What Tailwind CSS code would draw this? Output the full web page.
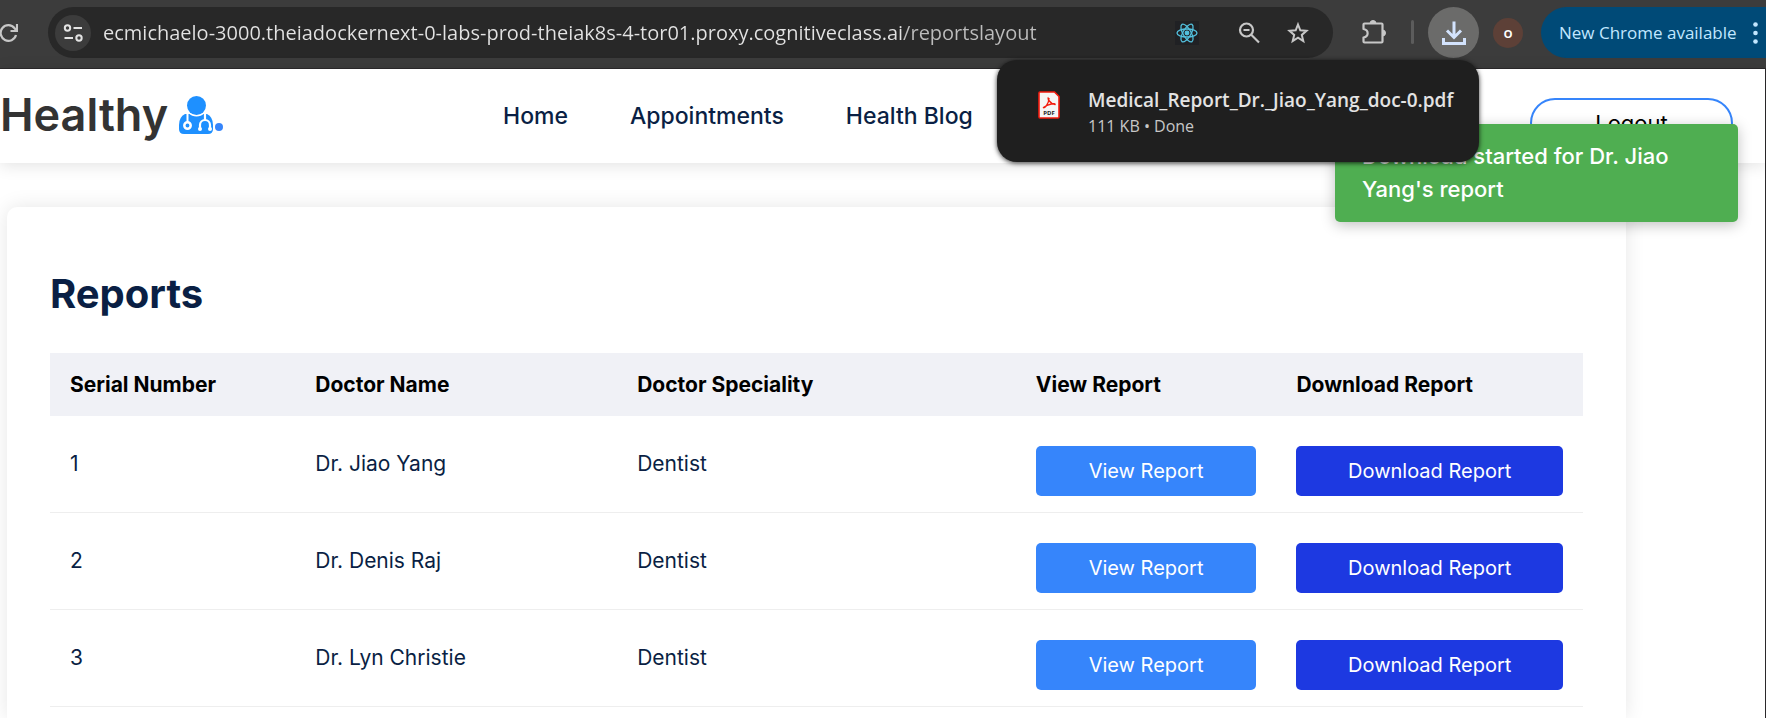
<!DOCTYPE html>
<html lang="en">
<head>
<meta charset="utf-8">
<meta name="viewport" content="width=device-width, initial-scale=1">
<title>Healthy - Reports</title>
<script src="https://cdn.jsdelivr.net/npm/@tailwindcss/browser@4"></script>
</head>
<body class="relative flex min-h-screen flex-col overflow-hidden bg-white font-['Inter',sans-serif] text-[#0a1f44]">

<!-- Browser toolbar -->
<div class="flex h-[69px] shrink-0 items-start border-b border-[#2b292b] bg-[#3c3c3c] pt-[7px] font-['Open_Sans','Noto_Sans',sans-serif]">
  <button aria-label="Reload" class="mr-[30px] flex h-[51px] w-[18px] shrink-0 items-center text-[#c7c7c7]">
    <svg class="h-[18px] w-[18px]" viewBox="0 0 18 18" fill="none" stroke="currentColor" stroke-width="2.2"><path d="M16 11A7.8 7.8 0 1 1 14.600 4.200L16.500 6.500"/><path d="M17 0V7H10.500"/></svg>
  </button>
  <div class="flex h-[51px] min-w-0 flex-1 items-center rounded-full bg-[#282828] pl-[7px] pr-[23px]">
    <button aria-label="View site information" class="flex size-[36px] shrink-0 items-center justify-center rounded-full bg-[#3c3c3c] text-[#e3e3e3]">
      <svg class="h-[20px] w-[20px]" viewBox="0 0 20 20" fill="none" stroke="currentColor" stroke-width="2"><circle cx="4.500" cy="5" r="2.700"/><path d="M10.500 5H19M1.500 15H10"/><circle cx="16" cy="15" r="2.700"/></svg>
    </button>
    <input aria-label="Address" class="ml-[12px] min-w-0 flex-1 bg-linear-to-r from-[#e3e3e3] from-[800px] to-[#bdbdbd] to-[800px] bg-clip-text text-[20px] text-transparent outline-none" value="ecmichaelo-3000.theiadockernext-0-labs-prod-theiak8s-4-tor01.proxy.cognitiveclass.ai/reportslayout">
    <div class="flex size-[24px] shrink-0 items-center justify-center bg-[#202124]">
      <svg class="size-[22px]" viewBox="0 0 22 22" fill="none" stroke="#53c1de" stroke-width="1.300"><ellipse cx="11" cy="11" rx="10" ry="4"/><ellipse cx="11" cy="11" rx="10" ry="4" transform="rotate(60 11 11)"/><ellipse cx="11" cy="11" rx="10" ry="4" transform="rotate(120 11 11)"/><circle cx="11" cy="11" r="1.800" fill="#53c1de"/></svg>
    </div>
    <button aria-label="Zoom" class="ml-[39px] shrink-0 text-[#c7c7c7]">
      <svg class="size-[22px]" viewBox="0 0 22 22" fill="none" stroke="currentColor" stroke-width="2.200"><circle cx="8.500" cy="8" r="6.500"/><path d="M5.500 8H11.500M13 12.500L21 20.500"/></svg>
    </button>
    <button aria-label="Bookmark this tab" class="ml-[26px] shrink-0 text-[#c7c7c7]">
      <svg class="size-[24px]" viewBox="0 0 24 24" fill="none" stroke="currentColor" stroke-width="2"><path d="M12 3.500L14.300 9.300L20.500 9.800L15.800 13.900L17.300 20L12 16.700L6.700 20L8.200 13.900L3.500 9.800L9.700 9.300Z"/></svg>
    </button>
  </div>
  <button aria-label="Extensions" class="ml-[28px] flex h-[51px] shrink-0 items-center text-[#c7c7c7]">
    <svg class="size-[26px]" viewBox="0 0 26 26" fill="none" stroke="currentColor" stroke-width="2.200"><path d="M3.500 3.500H20.500Q21.500 3.500 21.500 4.500V21.500Q21.500 22.500 20.500 22.500H3.500Q2.500 22.500 2.500 21.500V17.500C8 16.500 8 10 2.500 9V4.500Q2.500 3.500 3.500 3.500Z" stroke-linejoin="round"/><path d="M9 3.500A3 3 0 0 1 15 3.500ZM21.500 10A3 3 0 0 1 21.500 16Z" fill="currentColor" stroke-width="1"/></svg>
  </button>
  <span class="ml-[24px] mt-[13px] h-[24px] w-[3px] shrink-0 rounded bg-[#5c5c5c]"></span>
  <button aria-label="Downloads" class="ml-[14px] flex size-[51px] shrink-0 items-center justify-center rounded-full bg-[#6b6b6a] text-[#d3e3fd]">
    <svg class="size-[26px]" viewBox="0 0 26 26" fill="none" stroke="currentColor" stroke-width="3"><path d="M13 1.500V17M6 10.500L13 17.500L20 10.500M2.500 18V23.500H23.500V18"/></svg>
  </button>
  <button aria-label="Profile" class="ml-[14px] mt-[11px] flex size-[30px] shrink-0 items-center justify-center rounded-full bg-[#5d4037] pb-[2px] text-[15px] font-semibold leading-none text-white">o</button>
  <button class="ml-[18px] flex h-[51px] w-[225px] shrink-0 items-center justify-between rounded-l-full bg-[#004a77] pl-[18px] pr-[8px] text-[17px] text-[#c2e7ff]">
    <span class="whitespace-nowrap">New Chrome available</span>
    <svg class="h-[22px] w-[5px]" viewBox="0 0 5 22" fill="currentColor"><circle cx="2.500" cy="2.500" r="2.300"/><circle cx="2.500" cy="11" r="2.300"/><circle cx="2.500" cy="19.500" r="2.300"/></svg>
  </button>
</div>

<div class="flex flex-1 flex-col border-r border-[#2b292b]">
  <!-- Site header -->
  <header class="flex h-[94px] shrink-0 items-start bg-white pr-[32px] shadow-[0_2px_16px_rgba(0,0,0,0.12)]">
    <a href="#" class="mt-4 flex w-[503px] shrink-0 items-center text-[45px] font-semibold leading-[60px] text-[#333]">
      <span class="w-[179px]">Healthy</span>
      <svg class="h-[38px] w-[34px]" viewBox="0 0 34 38">
        <path d="M6 18H28Q34 21 34 29V33Q34 38 29 38H5Q0 38 0 33V29Q0 21 6 18Z" fill="#1e90ff"/>
        <circle cx="17.500" cy="9.500" r="11" fill="#fff"/>
        <circle cx="17.500" cy="9.500" r="9.500" fill="#1e90ff"/>
        <g fill="none" stroke="#fff" stroke-width="2"><path d="M8.500 17V26"/><circle cx="8.500" cy="29.500" r="3.200" stroke-width="2.500"/><path d="M26 17V24M21 33V29A5 5 0 0 1 31 29V33" stroke-width="2.200"/></g>
        <circle cx="21" cy="33" r="2" fill="#fff"/><circle cx="31" cy="33" r="2" fill="#fff"/>
      </svg>
      <span class="ml-[2px] mt-[24px] size-[8px] rounded-full bg-[#3685fb]"></span>
    </a>
    <nav class="mt-[31px] flex flex-1 gap-[62px] whitespace-nowrap text-[23px] font-medium leading-[32px]">
      <a href="#">Home</a>
      <a href="#">Appointments</a>
      <a href="#">Health Blog</a>
    </nav>
    <button class="mt-[29px] h-[50px] w-[203px] shrink-0 rounded-full border-2 border-[#3685fb] text-[22px] text-black">Logout</button>
  </header>

  <!-- Reports card -->
  <main class="ml-[7px] mr-[139px] mt-[44px] flex-1 rounded-t-[10px] bg-white px-[43px] pt-[61px] shadow-[0_0_20px_rgba(0,0,0,0.1)]">
    <h1 class="mb-[33px] text-[40px] font-bold leading-[52px]">Reports</h1>
    <table class="w-full table-fixed text-left text-[21px]">
      <thead>
        <tr class="h-[63px] bg-[#f0f1f6] text-black">
          <th class="w-[16%] whitespace-nowrap px-[20px] font-bold">Serial Number</th>
          <th class="w-[21%] px-[20px] font-bold">Doctor Name</th>
          <th class="w-[26%] px-[20px] font-bold">Doctor Speciality</th>
          <th class="w-[17%] px-[20px] font-bold">View Report</th>
          <th class="w-[20%] px-[20px] font-bold">Download Report</th>
        </tr>
      </thead>
      <tbody>
        <tr class="border-b border-[#eee]">
          <td class="px-[20px]">1</td><td class="px-[20px]">Dr. Jiao Yang</td><td class="px-[20px]">Dentist</td>
          <td class="px-[20px] pb-[16px] pt-[30px]"><button class="block h-[50px] w-full rounded-[5px] bg-[#3685fb] text-[20px] text-white">View Report</button></td>
          <td class="px-[20px] pb-[16px] pt-[30px]"><button class="block h-[50px] w-full rounded-[5px] bg-[#1d39e1] text-[20px] text-white">Download Report</button></td>
        </tr>
        <tr class="border-b border-[#eee]">
          <td class="px-[20px]">2</td><td class="px-[20px]">Dr. Denis Raj</td><td class="px-[20px]">Dentist</td>
          <td class="px-[20px] pb-[16px] pt-[30px]"><button class="block h-[50px] w-full rounded-[5px] bg-[#3685fb] text-[20px] text-white">View Report</button></td>
          <td class="px-[20px] pb-[16px] pt-[30px]"><button class="block h-[50px] w-full rounded-[5px] bg-[#1d39e1] text-[20px] text-white">Download Report</button></td>
        </tr>
        <tr class="border-b border-[#eee]">
          <td class="px-[20px]">3</td><td class="px-[20px]">Dr. Lyn Christie</td><td class="px-[20px]">Dentist</td>
          <td class="px-[20px] pb-[16px] pt-[30px]"><button class="block h-[50px] w-full rounded-[5px] bg-[#3685fb] text-[20px] text-white">View Report</button></td>
          <td class="px-[20px] pb-[16px] pt-[30px]"><button class="block h-[50px] w-full rounded-[5px] bg-[#1d39e1] text-[20px] text-white">Download Report</button></td>
        </tr>
      </tbody>
    </table>
  </main>
</div>

<!-- Toast -->
<div role="status" class="absolute right-[28px] top-[124px] w-[403px] rounded-[5px] bg-[#4fae51] px-[27px] py-4 text-[22px] font-medium leading-[33px] text-white shadow-[0_3px_14px_rgba(0,0,0,0.25)]">Download started for Dr. Jiao Yang's report</div>

<!-- Finished download bubble -->
<div class="absolute right-[287px] top-[60px] flex h-[102px] w-[482px] items-start gap-[28px] rounded-[20px] bg-[#1f1f1f] pl-[41px] pt-[26px] font-['Open_Sans','Noto_Sans',sans-serif] shadow-[0_1px_5px_rgba(0,0,0,0.8)]">
  <svg class="mt-[5px] h-[28px] w-[22px] shrink-0" viewBox="0 0 22 28"><path d="M2 1H16.500L21 5.500V26Q21 27 20 27H2Q1 27 1 26V2Q1 1 2 1Z" fill="#f5f5f5" stroke="#f21b0e" stroke-width="1.600"/><path d="M10.500 6.500C9 7 12 13 17 13.500C18 12 10 12.500 5.500 16.500C6 18 11 13 11 7" fill="none" stroke="#f21b0e" stroke-width="1.400"/><text x="11" y="24" text-anchor="middle" font-family="Open Sans, sans-serif" font-size="6" font-weight="700" fill="#222">PDF</text></svg>
  <div class="whitespace-nowrap">
    <p class="text-[19px] font-semibold leading-[28px] text-[#e3e3e3]">Medical_Report_Dr._Jiao_Yang_doc-0.pdf</p>
    <p class="text-[16px] leading-[24px] text-[#c7c7c7]">111 KB • Done</p>
  </div>
</div>
</body>
</html>
